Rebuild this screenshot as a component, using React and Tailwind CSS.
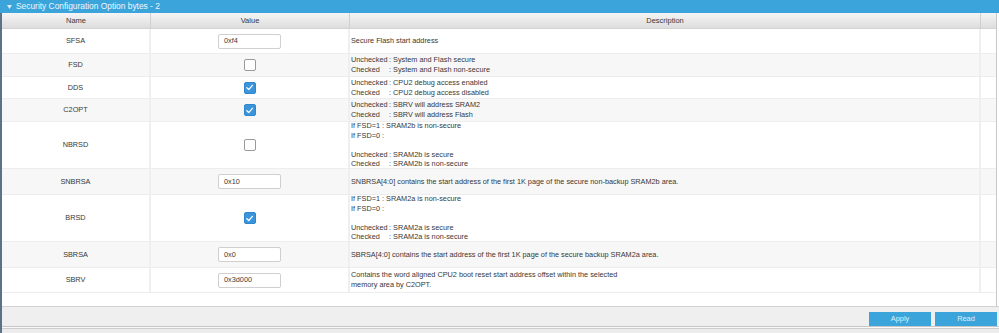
import React from "react";

const rows = [
  { name: "SFSA", kind: "input", value: "0xf4", h: "h-[25px]", desc: ["Secure Flash start address"] },
  { name: "FSD", kind: "check", checked: false, h: "h-[23px]", uc: ["System and Flash secure", "System and Flash non-secure"] },
  { name: "DDS", kind: "check", checked: true, h: "h-[22px]", uc: ["CPU2 debug access enabled", "CPU2 debug access disabled"] },
  { name: "C2OPT", kind: "check", checked: true, h: "h-[23px]", uc: ["SBRV will address SRAM2", "SBRV will address Flash"] },
  { name: "NBRSD", kind: "check", checked: false, h: "h-[47px]", fsd: "SRAM2b" },
  { name: "SNBRSA", kind: "input", value: "0x10", h: "h-[26px]", desc: ["SNBRSA[4:0] contains the start address of the first 1K page of the secure non-backup SRAM2b area."] },
  { name: "BRSD", kind: "check", checked: true, h: "h-[47px]", fsd: "SRAM2a" },
  { name: "SBRSA", kind: "input", value: "0x0", h: "h-[26px]", desc: ["SBRSA[4:0] contains the start address of the first 1K page of the secure backup SRAM2a area."] },
  {
    name: "SBRV",
    kind: "input",
    value: "0x3d000",
    h: "h-[25px]",
    desc: ["Contains the word aligned CPU2 boot reset start address offset within the selected", "memory area by C2OPT."],
  },
];

function CheckLine({ label, text }) {
  return (
    <div className="flex">
      <span className="inline-block w-[38px]">{label}</span>
      <span>: {text}</span>
    </div>
  );
}

function Description({ row }) {
  if (row.desc) {
    return (
      <div>
        {row.desc.map((d) => (
          <div key={d}>{d}</div>
        ))}
      </div>
    );
  }
  if (row.uc) {
    return (
      <div>
        <CheckLine label="Unchecked" text={row.uc[0]} />
        <CheckLine label="Checked" text={row.uc[1]} />
      </div>
    );
  }
  return (
    <div>
      <div>If FSD=1 : {row.fsd} is non-secure</div>
      <div>If FSD=0 :</div>
      <div className="h-[9.5px]"></div>
      <CheckLine label="Unchecked" text={`${row.fsd} is secure`} />
      <CheckLine label="Checked" text={`${row.fsd} is non-secure`} />
    </div>
  );
}

function Value({ row }) {
  if (row.kind === "input") {
    return (
      <div className="w-[63px] h-[15px] bg-white border border-[#cfcfcf] rounded-[2px] flex items-center pl-[5px] text-[#3a3a3a]">
        {row.value}
      </div>
    );
  }
  if (row.checked) {
    return (
      <div className="w-[12px] h-[12px] rounded-[2px] bg-[#3a95dc] border border-[#2f86cc] flex items-center justify-center">
        <svg width="9" height="9" viewBox="0 0 10 10">
          <path d="M2 5.2 L4.2 7.3 L8.2 2.6" fill="none" stroke="white" strokeWidth="1.4" strokeLinecap="round" strokeLinejoin="round" />
        </svg>
      </div>
    );
  }
  return <div className="w-[12px] h-[12px] rounded-[2px] bg-white border border-[#9a9a9a]"></div>;
}

export default function App() {
  return (
    <div className="w-[999px] h-[333px] bg-white overflow-hidden flex flex-col font-['Liberation_Sans',Arial,sans-serif] text-[7.3px] leading-[9.6px] text-[#383838]">
      {/* title bar */}
      <div className="h-[13px] shrink-0 bg-[#3ba5db] flex items-center pl-[7px] gap-[4px] text-white">
        <svg width="5" height="4" viewBox="0 0 5 4">
          <path d="M0 0 L5 0 L2.5 4 Z" fill="#d8ecf8" />
        </svg>
        <span className="text-[8.4px] text-[#eef7fc]">Security Configuration Option bytes - 2</span>
      </div>

      <div className="flex-1 flex flex-col border-l-2 border-[#5c7288]">
        {/* table */}
        <div className="flex flex-col w-[995px] border-r border-[#c9c9c9]">
          <div className="h-[16px] flex bg-gradient-to-b from-[#f5f5f5] to-[#dddddd] border-b border-[#d3d3d3] text-[7.5px]">
            <div className="w-[149px] border-r border-[#cfcfcf] flex items-center justify-center">Name</div>
            <div className="w-[199px] border-r border-[#cfcfcf] flex items-center justify-center">Value</div>
            <div className="w-[631px] border-r border-[#cfcfcf] flex items-center justify-center">Description</div>
            <div className="flex-1"></div>
          </div>
          {rows.map((row, i) => (
            <div
              key={row.name}
              className={`${row.h} flex border-b border-[#ededed] ${i % 2 === 0 ? "bg-white" : "bg-[#f7f7f7]"}`}
            >
              <div className="w-[149px] border-r-2 border-[#efefef] flex items-center justify-center">{row.name}</div>
              <div className="w-[199px] border-r-2 border-[#efefef] flex items-center justify-center">
                <Value row={row} />
              </div>
              <div className="w-[631px] border-r-2 border-[#efefef] flex items-center pl-[1px]">
                <Description row={row} />
              </div>
              <div className="flex-1"></div>
            </div>
          ))}
        </div>
        <div className="flex-1 border-r border-[#c9c9c9] w-[995px]"></div>

        {/* footer */}
        <div className="h-[20px] shrink-0 border-t border-[#d2d2d2] bg-[#efefef] flex items-end justify-end gap-[4px] pr-[2px]">
          <button className="w-[62px] h-[14px] bg-[#3ba5db] text-[#dff0fa] text-[7.4px] flex items-center justify-center">Apply</button>
          <button className="w-[62px] h-[14px] bg-[#3ba5db] text-[#dff0fa] text-[7.4px] flex items-center justify-center">Read</button>
        </div>
        <div className="h-[7px] shrink-0 border-t border-[#c6c6c6] bg-[#ececec] flex flex-col">
          <div className="h-[1px] bg-[#fafafa]"></div>
          <div className="h-[1px] bg-[#cfcfcf]"></div>
        </div>
      </div>
    </div>
  );
}
